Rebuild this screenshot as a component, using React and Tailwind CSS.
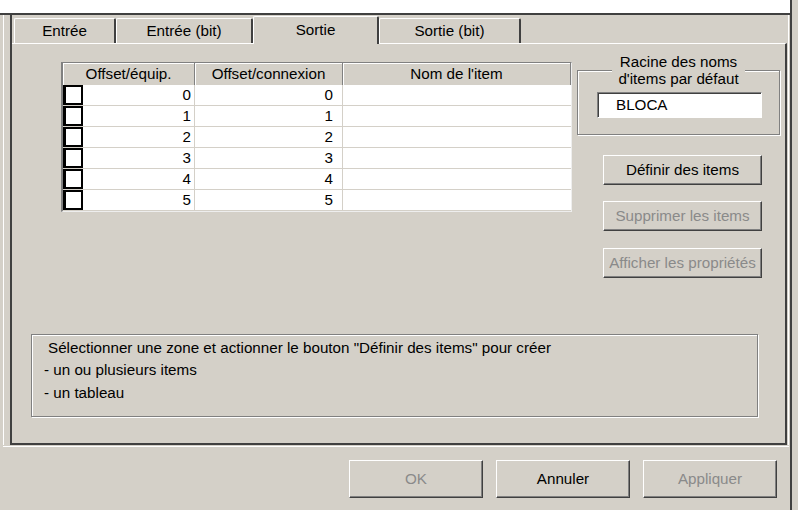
import React from "react";

const rows = [0, 1, 2, 3, 4, 5];

const raised =
  "border border-t-white border-l-white border-r-[#404040] border-b-[#404040] shadow-[inset_-1px_-1px_0_#808080]";

const Tab = ({ label, className, active }) => (
  <div
    className={`flex items-center justify-center rounded-t-[2px] border-l border-t border-r-2 border-l-white border-t-white border-r-[#404040] bg-[#d4d0c8] ${
      active ? "relative z-10 mt-px h-[28px]" : "mt-[3px] h-[25px]"
    } ${className}`}
  >
    {label}
  </div>
);

const HeaderCell = ({ className, children }) => (
  <div
    className={`flex items-center justify-center border-r border-[#808080] shadow-[inset_1px_1px_0_#fff] ${className}`}
  >
    {children}
  </div>
);

const SideButton = ({ children, disabled, className }) => (
  <button
    disabled={disabled}
    className={`ml-[26px] h-[30px] w-[159px] whitespace-nowrap bg-[#d4d0c8] ${raised} ${
      disabled ? "text-[#8a8a8a]" : "text-black"
    } ${className}`}
  >
    {children}
  </button>
);

const DialogButton = ({ children, disabled }) => (
  <button
    disabled={disabled}
    className={`h-[38px] w-[134px] bg-[#d4d0c8] ${raised} ${
      disabled ? "text-[#8a8a8a]" : "text-black"
    }`}
  >
    {children}
  </button>
);

export default function App() {
  return (
    <div className="flex h-[510px] w-[798px] overflow-hidden bg-[#d4d0c8] font-['Liberation_Sans',Arial,sans-serif] text-[15.2px] text-black">
      {/* main window column */}
      <div className="flex w-[790px] flex-col">
        <div className="h-[13px] bg-white" />
        <div className="h-[2px] bg-[#404040]" />

        {/* tab frame row */}
        <div className="flex h-[430px]">
          <div className="flex w-[10px] pl-[3px]">
            <div className="w-px bg-white" />
          </div>

          <div className="flex w-[777px] flex-col border-b-2 border-l-2 border-[#404040]">
            {/* tabs */}
            <div className="flex h-[28px] pl-[2px]">
              <Tab label="Entrée" className="w-[102px]" />
              <Tab label="Entrée (bit)" className="w-[137px]" />
              <Tab label="Sortie" className="w-[126px]" active />
              <Tab label="Sortie (bit)" className="w-[142px]" />
            </div>

            {/* panel */}
            <div className="flex h-[400px] flex-col border-r-2 border-t border-r-[#404040] border-t-white">
              <div className="flex items-start">
                {/* table */}
                <div className="ml-[49px] mt-[18px] w-[511px] border-b border-l-2 border-r border-t border-b-[#eeeeee] border-l-[#808080] border-r-[#eeeeee] border-t-[#808080] bg-white">
                  <div className="flex h-[22px] bg-[#d4d0c8]">
                    <HeaderCell className="w-[132px]">Offset/équip.</HeaderCell>
                    <HeaderCell className="w-[148px]">Offset/connexion</HeaderCell>
                    <HeaderCell className="w-[228px]">Nom de l'item</HeaderCell>
                  </div>
                  {rows.map((n) => (
                    <div key={n} className="flex h-[21px] border-b border-[#d4d0c8]">
                      <div className="flex w-[132px] items-center border-r border-[#d4d0c8]">
                        <div className="h-[20px] w-[20px] border-2 border-l-[3px] border-black bg-white" />
                        <span className="flex-1 pr-[3px] text-right">{n}</span>
                      </div>
                      <div className="flex w-[148px] items-center justify-end border-r border-[#d4d0c8] pr-[9px]">
                        {n}
                      </div>
                      <div className="w-[228px]" />
                    </div>
                  ))}
                </div>

                {/* right column */}
                <div className="ml-[5px] mt-[9px] flex w-[203px] flex-col items-start">
                  <fieldset className="w-[203px] border border-[#808080] shadow-[inset_1px_1px_0_#fff,1px_1px_0_#fff]">
                    <legend className="mx-auto bg-[#d4d0c8] px-[6px] text-center leading-[17px]">
                      Racine des noms
                      <br />
                      d'items par défaut
                    </legend>
                    <div className="mb-[16px] ml-[19px] mt-[5px] h-[26px] w-[165px] border border-b-white border-l-[#808080] border-r-white border-t-[#808080] bg-white pl-[18px] leading-[24px] shadow-[inset_1px_1px_0_#404040]">
                      BLOCA
                    </div>
                  </fieldset>
                  <SideButton className="mt-[20px]">Définir des items</SideButton>
                  <SideButton className="mt-[16px]" disabled>
                    Supprimer les items
                  </SideButton>
                  <SideButton className="mt-[17px]" disabled>
                    Afficher les propriétés
                  </SideButton>
                </div>
              </div>

              {/* info box */}
              <div className="ml-[19px] mt-[56px] h-[83px] w-[727px] border border-[#808080] pt-[2px] leading-[22px] shadow-[inset_1px_1px_0_#fff,1px_1px_0_#fff]">
                <div className="pl-[16px]">
                  Sélectionner une zone et actionner le bouton "Définir des items" pour créer
                </div>
                <div className="pl-[12px]">- un ou plusieurs items</div>
                <div className="pl-[12px] pt-px">- un tableau</div>
              </div>
            </div>
          </div>

          <div className="w-px" />
          <div className="w-px bg-white" />
          <div className="w-px" />
        </div>

        <div className="h-px" />
        <div className="ml-[3px] h-px w-[786px] bg-white" />

        {/* dialog buttons */}
        <div className="ml-[349px] mt-[13px] flex gap-[13px]">
          <DialogButton disabled>OK</DialogButton>
          <DialogButton>Annuler</DialogButton>
          <DialogButton disabled>Appliquer</DialogButton>
        </div>
      </div>

      <div className="h-full w-[2px] bg-[#404040]" />
    </div>
  );
}
